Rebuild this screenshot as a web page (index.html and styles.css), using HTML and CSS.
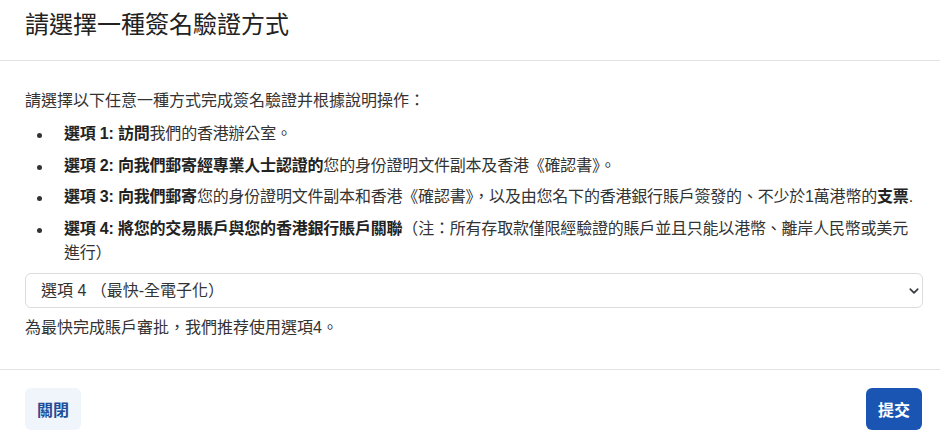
FILE: index.html
```html
<!DOCTYPE html>
<html lang="zh-Hant">
<head>
  <meta charset="UTF-8" />
  <meta name="viewport" content="width=device-width, initial-scale=1.0"/>
  <title>簽名驗證</title>
  <link rel="stylesheet" href="styles.css">
</head>
<body>
  <div class="modal">
    <div class="modal-header">
      <h1 class="modal-title">請選擇一種簽名驗證方式</h1>
    </div>

    <div class="modal-body">
      <p class="intro">請選擇以下任意一種方式完成簽名驗證并根據說明操作：</p>
      <ul class="opciones">
        <li><span class="dot"></span><span><b>選項 1: 訪問</b>我們的香港辦公室。</span></li>
        <li><span class="dot"></span><span><b>選項 2: 向我們郵寄經專業人士認證的</b>您的身份證明文件副本及香港《確認書》。</span></li>
        <li><span class="dot"></span><span><b>選項 3: 向我們郵寄</b>您的身份證明文件副本和香港《確認書》，以及由您名下的香港銀行賬戶簽發的、不少於1萬港幣的<b>支票</b>.</span></li>
        <li><span class="dot"></span><span><b>選項 4: 將您的交易賬戶與您的香港銀行賬戶關聯</b>（注：所有存取款僅限經驗證的賬戶並且只能以港幣、離岸人民幣或美元進行）</span></li>
      </ul>

      <div class="select-wrap">
        <select class="form-select">
          <option>選項 4 （最快-全電子化）</option>
          <option>選項 1</option>
          <option>選項 2</option>
          <option>選項 3</option>
        </select>
        <svg class="chevron" width="12" height="10" viewBox="0 0 16 16">
          <path d="M2 5l6 6 6-6" fill="none" stroke="#343a40" stroke-width="2.6" stroke-linecap="round" stroke-linejoin="round"/>
        </svg>
      </div>

      <p class="nota">為最快完成賬戶審批，我們推荐使用選項4。</p>
    </div>

    <div class="modal-footer">
      <button class="btn btn-light">關閉</button>
      <button class="btn btn-primary">提交</button>
    </div>
  </div>
</body>
</html>
```

FILE: styles.css
```css
body {
  margin: 0;
  background: #fff;
  font-family: "Liberation Sans", "Noto Sans CJK TC", sans-serif;
  font-size: 16px;
  line-height: 24px;
  color: #333;
}

.modal {
  width: 940px;
}

.modal-header {
  padding: 10px 25px 20px 25px;
  border-bottom: 1px solid #e3e3e3;
}

.modal-title {
  margin: 0;
  font-size: 24px;
  line-height: 30px;
  font-weight: normal;
  color: #222;
}

.modal-body {
  padding: 28px 17px 29px 25px;
}

.intro {
  margin: 0 0 9px 0;
}

.opciones {
  margin: 0;
  padding-left: 12px;
  list-style: none;
  letter-spacing: -0.2px;
}

.opciones li {
  display: grid;
  grid-template-columns: 27px 1fr;
  margin-bottom: 7.5px;
}

.opciones li:last-child {
  margin-bottom: 8px;
}

.dot {
  width: 5px;
  height: 5px;
  margin-top: 11px;
  border-radius: 50%;
  background: #333;
}

.opciones b {
  font-weight: bold;
  color: #222;
}

.select-wrap {
  position: relative;
}

.form-select {
  display: block;
  width: 100%;
  height: 35px;
  padding: 0 36px 0 15px;
  font-family: inherit;
  font-size: 16px;
  color: #333;
  background: #fff;
  border: 1px solid #dcdcdc;
  border-radius: 6px;
  appearance: none;
  -webkit-appearance: none;
}

.chevron {
  position: absolute;
  right: 3px;
  top: 13px;
  pointer-events: none;
}

.nota {
  margin: 8px 0 0 0;
}

.modal-footer {
  display: flex;
  justify-content: space-between;
  align-items: flex-start;
  padding: 18px 18px 14px 25px;
  border-top: 1px solid #e3e3e3;
}

.btn {
  height: 42px;
  padding: 0 12px;
  font-family: inherit;
  font-size: 16px;
  font-weight: bold;
  border: none;
  border-radius: 6px;
  cursor: pointer;
}

.btn-light {
  background: #f0f4fb;
  color: #1f4e98;
}

.btn-primary {
  background: #1b55b3;
  color: #fff;
}

.btn-primary:hover {
  background: #174a9c;
}
```
